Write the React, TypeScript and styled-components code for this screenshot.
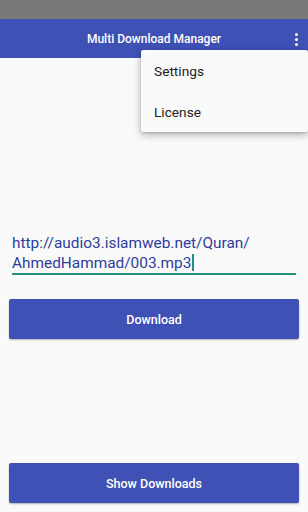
import React from "react";
import styled, { createGlobalStyle } from "styled-components";

const Global = createGlobalStyle`
  html, body { margin: 0; padding: 0; }
  body { font-family: Roboto, "Noto Sans", sans-serif; background: #fafafa; }
  #root { width: 308px; height: 512px; }
`;

const Screen = styled.div`
  position: relative;
  width: 308px;
  height: 512px;
  display: flex;
  flex-direction: column;
  background: #fafafa;
  overflow: hidden;
`;

const StatusBar = styled.div`
  height: 19px;
  background: #787878;
`;

const AppBar = styled.div`
  height: 39px;
  background: #3f51b5;
  display: flex;
  align-items: center;
  justify-content: center;
  position: relative;
`;

const Title = styled.div`
  color: #fff;
  font-size: 12px;
  font-weight: 500;
`;

const Overflow = styled.div`
  position: absolute;
  right: 10px;
  top: 14px;
  display: flex;
  flex-direction: column;
  gap: 2px;
`;

const Dot = styled.span`
  width: 3px;
  height: 3px;
  border-radius: 50%;
  background: #fff;
`;

const Menu = styled.div`
  position: absolute;
  top: 50px;
  left: 141px;
  right: 0;
  height: 82px;
  background: #fafafa;
  border-radius: 2px;
  box-shadow: 0 3px 8px rgba(0, 0, 0, 0.28), 0 1px 3px rgba(0, 0, 0, 0.15);
  display: flex;
  flex-direction: column;
  padding: 1px 0 0;
  box-sizing: border-box;
`;

const MenuItem = styled.div`
  height: 41px;
  display: flex;
  align-items: center;
  padding-left: 13px;
  font-size: 13.7px;
  color: #212121;
`;

const Content = styled.div`
  flex: 1;
  display: flex;
  flex-direction: column;
  padding: 0 9px;
`;

const Field = styled.div`
  margin-top: 175px;
  margin-left: 3px;
  margin-right: 3px;
  border-bottom: 2px solid #26907e;
  padding-bottom: 0px;
  font-size: 15.4px;
  line-height: 20px;
  color: #2f3c9a;
`;

const Caret = styled.span`
  display: inline-block;
  width: 1.5px;
  height: 17px;
  background: #26907e;
  vertical-align: -3px;
  margin-left: 1px;
`;

const Button = styled.div<{ $mt: number }>`
  margin-top: ${(p) => p.$mt}px;
  height: 40px;
  background: #3f51b5;
  color: #fff;
  font-size: 12.5px;
  font-weight: 500;
  display: flex;
  align-items: center;
  justify-content: center;
  border-radius: 2px;
  box-shadow: 0 1px 2px rgba(0, 0, 0, 0.3);
`;

export default function App() {
  return (
    <>
      <Global />
      <Screen>
        <StatusBar />
        <AppBar>
          <Title>Multi Download Manager</Title>
          <Overflow>
            <Dot />
            <Dot />
            <Dot />
          </Overflow>
        </AppBar>
        <Content>
          <Field>
            http://audio3.islamweb.net/Quran/
            <br />
            AhmedHammad/003.mp3
            <Caret />
          </Field>
          <Button $mt={24}>Download</Button>
          <Button $mt={124}>Show Downloads</Button>
        </Content>
        <Menu>
          <MenuItem>Settings</MenuItem>
          <MenuItem>License</MenuItem>
        </Menu>
      </Screen>
    </>
  );
}
